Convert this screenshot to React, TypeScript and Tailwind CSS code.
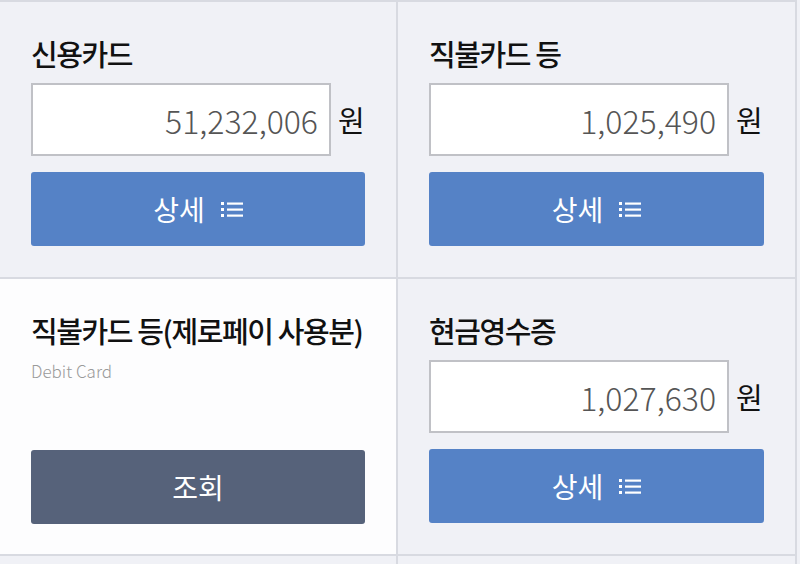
import React from "react";

const font = { fontFamily: '"Noto Sans CJK KR", "Noto Sans", sans-serif' };

function ListIcon() {
  return (
    <svg width="22" height="17" viewBox="0 0 22 17" className="ml-[16px]">
      <rect x="0" y="1" width="3" height="3" fill="white" />
      <rect x="0" y="7" width="3" height="3" fill="white" />
      <rect x="0" y="13" width="3" height="3" fill="white" />
      <rect x="6" y="1.5" width="16" height="2.2" fill="white" />
      <rect x="6" y="7.5" width="16" height="2.2" fill="white" />
      <rect x="6" y="13.5" width="16" height="2.2" fill="white" />
    </svg>
  );
}

function Title({ children }: { children: React.ReactNode }) {
  return (
    <div className="text-[29px] leading-[40px] font-medium text-[#111] tracking-[-1.4px] whitespace-nowrap">
      {children}
    </div>
  );
}

function AmountCell({ title, amount }: { title: string; amount: string }) {
  return (
    <div className="bg-[#f0f1f6] pt-[31px] px-[31px] pb-[31px] flex flex-col">
      <Title>{title}</Title>
      <div className="mt-[10px] flex items-center">
        <div className="w-[300px] h-[73px] bg-white border-2 border-[#c0c1c6] flex items-center justify-end pr-[11px] text-[32px] text-[#555] font-light">
          {amount}
        </div>
        <div className="ml-[7px] text-[29px] text-[#111]">원</div>
      </div>
      <button className="mt-[16px] h-[74px] w-full rounded-[3px] bg-[#5582c6] text-white text-[28px] font-normal flex items-center justify-center">
        <span>상세</span>
        <ListIcon />
      </button>
    </div>
  );
}

export default function App() {
  return (
    <div className="w-[800px] h-[564px] overflow-hidden bg-[#f0f1f6]" style={font}>
      <div className="w-[797px] grid grid-cols-[396px_397px] gap-[2px] bg-[#d8dae1] border-t-2 border-r-2 border-[#d8dae1]">
        <AmountCell title="신용카드" amount="51,232,006" />
        <AmountCell title="직불카드 등" amount="1,025,490" />
        <div className="bg-[#fdfdfe] pt-[31px] px-[31px] pb-[30px] flex flex-col h-[275px]">
          <Title>직불카드 등(제로페이 사용분)</Title>
          <div className="mt-[10px] text-[17px] leading-[22px] text-[#9a9a9a] font-light">Debit Card</div>
          <button className="mt-auto h-[74px] w-full rounded-[3px] bg-[#56627a] text-white text-[28px] font-normal flex items-center justify-center">
            조회
          </button>
        </div>
        <AmountCell title="현금영수증" amount="1,027,630" />
        <div className="bg-[#f0f1f6] h-[40px]" />
        <div className="bg-[#f0f1f6] h-[40px]" />
      </div>
    </div>
  );
}
